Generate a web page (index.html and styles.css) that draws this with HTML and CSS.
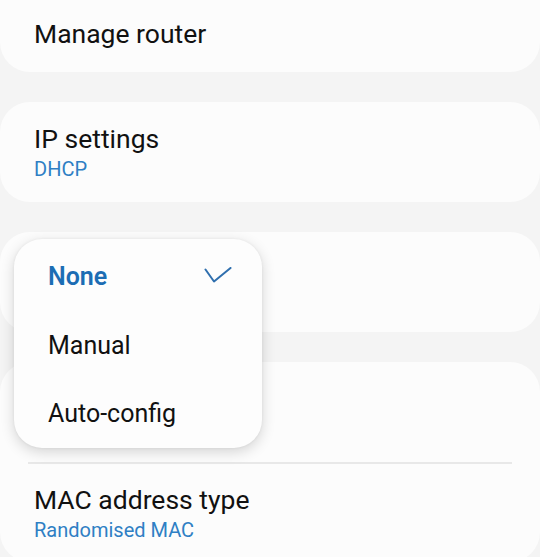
FILE: index.html
```html
<!DOCTYPE html>
<html>
<head>
<meta charset="utf-8">
<link rel="stylesheet" href="styles.css">
</head>
<body>
<div class="screen">
  <div class="card card-top">
    <div class="title">Manage router</div>
  </div>
  <div class="card card-mid">
    <div class="title">IP settings</div>
    <div class="sub">DHCP</div>
  </div>
  <div class="card card-proxy"></div>
  <div class="card card-bottom">
    <div class="blank"></div>
    <div class="divider"></div>
    <div class="row">
      <div class="title">MAC address type</div>
      <div class="sub">Randomised MAC</div>
    </div>
  </div>

  <div class="menu">
    <div class="item selected">
      <span>None</span>
      <svg class="check" width="28" height="18" viewBox="0 0 28 18"><path d="M1.5 2.5 L10 14.5 L26.5 1" fill="none" stroke="#2f6fae" stroke-width="2" stroke-linecap="round" stroke-linejoin="round"/></svg>
    </div>
    <div class="item"><span>Manual</span></div>
    <div class="item"><span>Auto-config</span></div>
  </div>
</div>
</body>
</html>
```

FILE: styles.css
```css
html, body {
  margin: 0;
  padding: 0;
}
body {
  background: #f4f4f4;
  font-family: Roboto, "Noto Sans", sans-serif;
  color: #111;
  width: 540px;
  height: 557px;
  overflow: hidden;
}
.screen {
  position: relative;
  display: flex;
  flex-direction: column;
  gap: 30px;
}
.card {
  background: #fcfcfc;
  border-radius: 30px;
  box-sizing: border-box;
  padding: 0 34px;
}
.card-top {
  margin-top: -30px;
  height: 102px;
  padding-top: 48px;
}
.card-mid {
  height: 100px;
  padding-top: 21px;
}
.card-proxy {
  height: 100px;
}
.card-bottom {
  height: 200px;
  padding: 0 28px;
}
.blank {
  height: 100px;
}
.divider {
  height: 2px;
  background: #e8e8e8;
}
.row {
  padding: 20px 6px 0;
}
.title {
  font-size: 26.5px;
  line-height: 32px;
}
.sub {
  margin-top: 2px;
  font-size: 20px;
  line-height: 24px;
  color: #2f7fc4;
}
.row .sub {
  margin-top: 2px;
}
.menu {
  position: absolute;
  left: 14px;
  top: 239px;
  width: 248px;
  height: 209px;
  box-sizing: border-box;
  background: #fdfdfd;
  border-radius: 28px;
  box-shadow: 0 4px 14px rgba(0, 0, 0, 0.16), 0 0 3px rgba(0, 0, 0, 0.06);
  padding: 3px 30px 0 34px;
  display: flex;
  flex-direction: column;
  justify-content: center;
}
.item {
  height: 70.5px;
  display: flex;
  align-items: center;
  justify-content: space-between;
  font-size: 25px;
}
.item.selected {
  color: #1c6db4;
  font-weight: 600;
}
.check {
  display: block;
}
```
